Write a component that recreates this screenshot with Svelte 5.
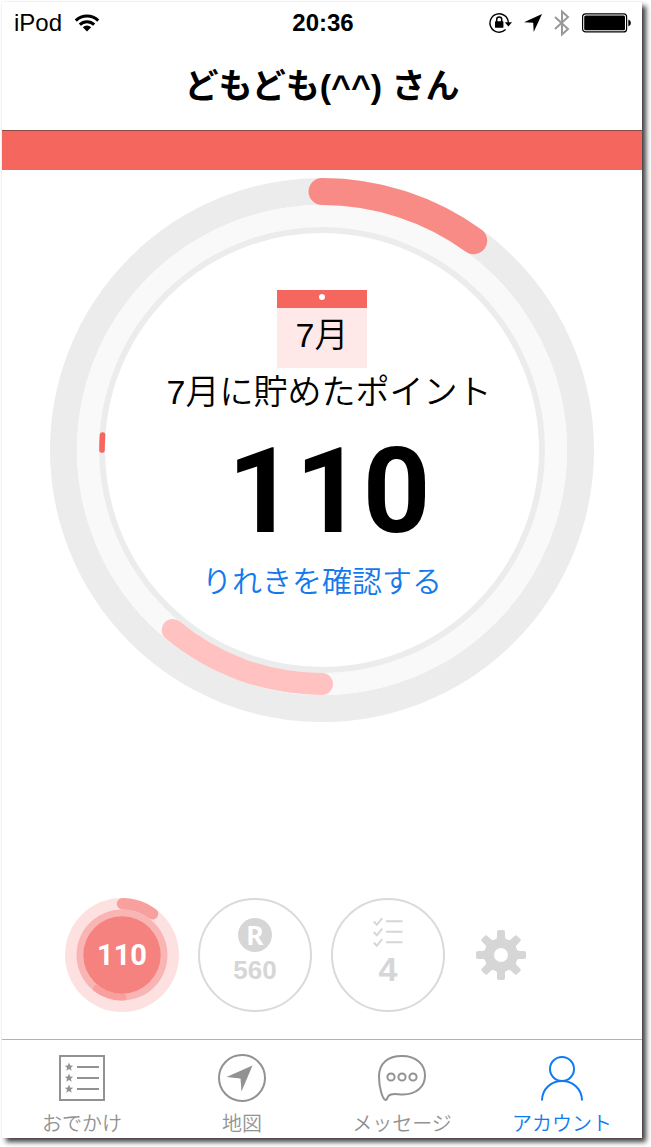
<script>
	let user = 'どもども(^^) さん';
	let month = 7;
	let points = 110;
	let superPoints = 560;
	let tasks = 4;

	let current = 'account';
	let tabs = [
		{ id: 'outing', label: 'おでかけ' },
		{ id: 'map', label: '地図' },
		{ id: 'message', label: 'メッセージ' },
		{ id: 'account', label: 'アカウント' }
	];

	let teeth = [0, 45, 90, 135, 180, 225, 270, 315];
</script>

<div class="phone">
	<div class="status">
		<div class="carrier">
			<span>iPod</span>
			<svg width="26" height="18" viewBox="0 0 26 18" fill="none" stroke="#000">
				<path d="M1.8 6.6a16 16 0 0 1 22.4 0" stroke-width="3" />
				<path d="M5.8 10.6a10.3 10.3 0 0 1 14.4 0" stroke-width="3" />
				<path d="M8.8 13.2a6 6 0 0 1 8.4 0L13 17.6z" fill="#000" stroke="none" />
			</svg>
		</div>
		<span class="time">20:36</span>
		<div class="indicators">
			<svg width="24" height="22" viewBox="0 0 24 22">
				<path d="M17.6 17.6a9.2 9.2 0 1 1 2.8-6.8" fill="none" stroke="#000" stroke-width="1.4" />
				<path d="M16.8 10.3h7.2l-3.6 4.2z" />
				<rect x="7" y="9.2" width="8.4" height="6.6" rx=".6" />
				<path d="M8.7 10V7.5a2.5 2.5 0 0 1 5 0V10" fill="none" stroke="#000" stroke-width="1.5" />
			</svg>
			<svg width="18" height="18" viewBox="0 0 18 18">
				<path d="M18 0 9.7 18 9.2 8.8 0 8.3z" />
			</svg>
			<svg width="16" height="28" viewBox="0 0 16 28" fill="none" stroke="#999" stroke-width="2">
				<path d="M1 8 14 20 8 25.5V2.500L14 8 1 20" />
			</svg>
			<svg width="50" height="20" viewBox="0 0 50 20">
				<rect x=".6" y=".9" width="44" height="18" rx="3" fill="none" stroke="#000" stroke-width="1.2" />
				<rect x="2.2" y="2.5" width="40.8" height="14.8" rx="1.5" />
				<path d="M46.3 6.4q2.6.8 2.6 3.5t-2.6 3.5z" />
			</svg>
		</div>
	</div>

	<header>
		<h1>{user}</h1>
	</header>
	<div class="banner"></div>

	<main>
		<div class="gauge">
			<svg class="rings" viewBox="0 0 544 544" fill="none">
				<circle cx="272" cy="272" r="258.5" stroke="#ececec" stroke-width="27" />
				<circle cx="272" cy="272" r="234" stroke="#f9f9f9" stroke-width="22" />
				<circle cx="272" cy="272" r="220" stroke="#ececec" stroke-width="6" />
				<g stroke-linecap="round">
					<path d="M272 13.5A258.5 258.5 0 0 1 423.7 62.7" stroke="#f98b86" stroke-width="27" />
					<path d="M272 506A234 234 0 0 1 122.7 452" stroke="#ffc2c1" stroke-width="22" />
					<path d="M52 272A220 220 0 0 1 52.5 257" stroke="#f5665f" stroke-width="5.6" />
				</g>
			</svg>
			<div class="summary">
				<div class="calendar">
					<div class="pin"></div>
					<span>{month}月</span>
				</div>
				<p class="caption">{month}月に貯めたポイント</p>
				<p class="points">{points}</p>
				<a href="#history">りれきを確認する</a>
			</div>
		</div>

		<div class="chips">
			<button class="chip active" aria-label="ポイント {points}">
				<svg width="114" height="114" viewBox="0 0 114 114">
					<circle cx="57" cy="57" r="57" fill="#fde1e1" />
					<circle cx="57" cy="57" r="45.5" fill="#f9b5b3" />
					<g fill="none" stroke="#f8a09d" stroke-linecap="round">
						<path d="M57.5 5.8A51.2 51.2 0 0 1 87.6 15.9" stroke-width="11.4" />
						<path d="M58 99A42 42 0 0 1 31.5 90.5" stroke-width="7" />
					</g>
					<circle cx="57" cy="57" r="38.7" fill="#f5827e" />
				</svg>
				<span>{points}</span>
			</button>
			<button class="chip ring">
				<span class="badge">R</span>
				<span>{superPoints}</span>
			</button>
			<button class="chip ring">
				<svg width="30" height="32" viewBox="0 0 30 32" fill="none" stroke="#d6d6d6" stroke-width="2">
					{#each [0, 10.5, 21] as y}
						<path d="M.8 {y + 4.5} 3.8 {y + 7.8} 9.2 {y + 1.2}M13 {y + 4.2}H29.5" />
					{/each}
				</svg>
				<span class="count">{tasks}</span>
			</button>
			<button class="gear" aria-label="設定">
				<svg width="50" height="50" viewBox="-25 -25 50 50" fill="#d6d6d6">
					<circle r="11.9" fill="none" stroke="#d6d6d6" stroke-width="9.8" />
					{#each teeth as angle}
						<path
							transform="rotate({angle})"
							d="M-6.2-15C-4.4-16-4-17-4-18.500V-23Q-4-25-2-25H2Q4-25 4-23V-18.500C4-17 4.400-16 6.200-15z"
						/>
					{/each}
				</svg>
			</button>
		</div>
	</main>

	<nav>
		{#each tabs as tab}
			<a href="#{tab.id}" class:selected={tab.id === current} on:click={() => (current = tab.id)}>
				<svg width="50" height="50" viewBox="0 0 50 50" fill="none" stroke="currentColor" stroke-width="2">
					{#if tab.id === 'outing'}
						<rect x="3" y="3" width="44" height="44" />
						{#each [14, 25, 36] as y}
							<path d="M20 {y}H42" />
							<path
								transform="translate(12 {y})"
								d="M0-4.400 1.200-1.500 4.200-1.300 1.900.7 2.700 3.800 0 2.100-2.700 3.800-1.900.7-4.200-1.300-1.200-1.500z"
								fill="currentColor"
								stroke="none"
							/>
						{/each}
					{:else if tab.id === 'map'}
						<circle cx="25" cy="25" r="23" />
						<path d="M35.500 12.500 24.500 38.500 23.500 25.500 9.500 24z" fill="currentColor" stroke="none" />
					{:else if tab.id === 'message'}
						<path d="M8.500 47C6 46.500 2 36 2 23.500 2 10 11 3 25 3S48 11 48 22.500 39 41.500 26 41.500C20 41.500 14.500 39.500 11.500 43 10 45 10 47.300 8.500 47z" />
						{#each [14, 25, 36] as x}
							<circle cx={x} cy="24" r="3.600" />
						{/each}
					{:else}
						<circle cx="25" cy="16" r="12" />
						<path d="M5 47.500C5 36 14 28 25 28S45 36 45 47.500" />
					{/if}
				</svg>
				<span>{tab.label}</span>
			</a>
		{/each}
	</nav>
</div>

<style>
	:global(body) {
		background: #fff;
	}

	:global(#app) {
		padding-top: 2px;
	}

	.phone {
		box-sizing: border-box;
		display: flex;
		flex-direction: column;
		min-height: calc(100vh - 11px);
		margin: 0 9px 9px 2px;
		background: #fff;
		color: #000;
		font-family: "Liberation Sans", "Noto Sans CJK JP", sans-serif;
		box-shadow: 0 0 1px rgba(0, 0, 0, 0.2), 4px 4px 5px rgba(0, 0, 0, 0.75);
	}

	.status {
		box-sizing: border-box;
		display: grid;
		grid-template-columns: 1fr auto 1fr;
		align-items: center;
		height: 40px;
		padding: 2px 10px 0 12px;
		font-size: 24px;
	}

	.carrier,
	.indicators {
		display: flex;
		align-items: center;
		gap: 12px;
	}

	.indicators {
		justify-content: flex-end;
	}

	.time {
		font-weight: bold;
	}

	header {
		display: flex;
		align-items: center;
		justify-content: center;
		height: 88px;
	}

	h1 {
		margin: 0;
		font-size: 34px;
		line-height: 48px;
	}

	.banner {
		height: 39px;
		border-top: 1px solid #8c4a47;
		background: #f5665f;
	}

	main {
		flex: 1;
		display: flex;
		flex-direction: column;
	}

	.gauge {
		display: grid;
		width: 85%;
		margin: 8px auto 40px;
	}

	.rings,
	.summary {
		grid-area: 1 / 1;
	}

	.rings {
		display: block;
		width: 100%;
	}

	.summary {
		display: flex;
		flex-direction: column;
		align-items: center;
		justify-content: center;
		padding-bottom: 6px;
		font-weight: 350;
	}

	.calendar {
		width: 90px;
		background: #ffe9e8;
		font-size: 34px;
		line-height: 54px;
		text-align: center;
	}

	.calendar span {
		display: block;
		height: 60px;
	}

	.pin {
		display: flex;
		justify-content: center;
		height: 14px;
		padding-top: 4px;
		background: #f5665f;
	}

	.pin::before {
		content: "";
		width: 6px;
		height: 6px;
		border-radius: 50%;
		background: #fff;
	}

	.summary p {
		margin: 0;
		padding-left: 14px;
	}

	.caption {
		font-size: 34px;
		line-height: 48px;
	}

	.summary .points {
		font-family: Roboto, "Liberation Sans", sans-serif;
		font-weight: bold;
		font-size: 118px;
		line-height: 120px;
		margin: 16px 0 8px;
	}

	.summary a {
		color: #147aeb;
		font-size: 30px;
		line-height: 44px;
		text-decoration: none;
	}

	.chips {
		display: flex;
		align-items: center;
		gap: 19px;
		margin: auto 0 27px;
		padding: 0 63px;
	}

	button {
		padding: 0;
		border: 0;
		background: none;
		font-family: inherit;
		cursor: pointer;
	}

	.chip {
		box-sizing: border-box;
		display: flex;
		flex-direction: column;
		align-items: center;
		justify-content: center;
		width: 114px;
		height: 114px;
		border-radius: 50%;
		color: #d6d6d6;
		font-weight: bold;
		font-size: 26px;
		line-height: 36px;
	}

	.ring {
		padding-bottom: 4px;
		border: 2px solid #dadada;
	}

	.active {
		display: grid;
		place-items: center;
		color: #fff;
		font-family: Roboto, "Liberation Sans", sans-serif;
		font-size: 29px;
	}

	.active > * {
		grid-area: 1 / 1;
	}

	.badge {
		width: 34px;
		height: 34px;
		border-radius: 50%;
		background: #d6d6d6;
		color: #fff;
		font-family: Lato, sans-serif;
		font-weight: 900;
		line-height: 34px;
	}

	.count {
		font-size: 34px;
		line-height: 40px;
	}

	.gear {
		display: flex;
		margin-left: 12px;
	}

	nav {
		display: grid;
		grid-template-columns: repeat(4, 1fr);
		height: 98px;
		border-top: 1px solid #b2b2b2;
	}

	nav a {
		display: flex;
		flex-direction: column;
		align-items: center;
		padding-top: 13px;
		color: #929292;
		font-size: 20px;
		font-weight: 350;
		line-height: 42px;
		text-decoration: none;
	}

	nav a svg {
		flex: none;
	}

	nav a.selected {
		color: #0f7bf0;
	}
</style>
